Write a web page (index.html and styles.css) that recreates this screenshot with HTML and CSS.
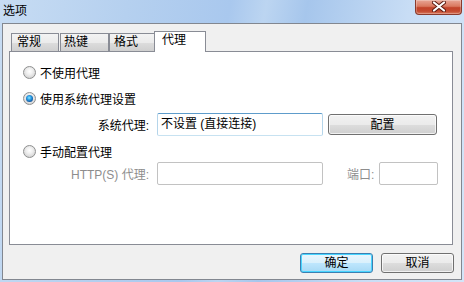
FILE: index.html
```html
<!DOCTYPE html>
<html lang="zh-CN">
<head>
<meta charset="utf-8">
<title>选项</title>
<link rel="stylesheet" href="styles.css">
</head>
<body>
<div class="window">
  <div class="titlebar">
    <span class="title">选项</span>
    <span class="close">
      <svg width="14" height="11" viewBox="0 0 14 11">
        <path d="M2 1.5 L12 9.5 M12 1.5 L2 9.5" stroke="#5a1a10" stroke-width="4" stroke-linecap="round"/>
        <path d="M2 1.5 L12 9.5 M12 1.5 L2 9.5" stroke="#ffffff" stroke-width="2.2" stroke-linecap="round"/>
      </svg>
    </span>
  </div>
  <div class="client">
    <div class="tabs">
      <div class="tab t1">常规</div>
      <div class="tab t2">热键</div>
      <div class="tab t3">格式</div>
      <div class="tab active">代理</div>
    </div>
    <div class="panel">
      <div class="radio-row r1"><span class="radio"></span><span>不使用代理</span></div>
      <div class="radio-row r2"><span class="radio checked"></span><span>使用系统代理设置</span></div>
      <div class="field-row f1">
        <span class="label">系统代理:</span>
        <span class="textbox focus">不设置 (直接连接)</span>
        <span class="button wide">配置</span>
      </div>
      <div class="radio-row r3"><span class="radio"></span><span>手动配置代理</span></div>
      <div class="field-row f2">
        <span class="label disabled">HTTP(S) 代理:</span>
        <span class="textbox dis"></span>
        <span class="port-label disabled">端口:</span>
        <span class="textbox dis port"></span>
      </div>
    </div>
    <div class="actions">
      <span class="button default">确定</span>
      <span class="button">取消</span>
    </div>
  </div>
</div>
</body>
</html>
```
FILE: styles.css
```css
html, body {
  margin: 0;
  padding: 0;
}
body {
  width: 464px;
  height: 282px;
  overflow: hidden;
  font-family: "Liberation Sans", "Noto Sans CJK SC", sans-serif;
  font-size: 12px;
  color: #000;
}
.window {
  width: 464px;
  height: 282px;
  box-sizing: border-box;
  padding: 0 2px 2px 2px;
  display: flex;
  flex-direction: column;
  background: linear-gradient(100deg, #c7dcf3 0%, #b5d0ef 25%, #a9c8ee 45%, #bcd5f1 52%, #a6c6ec 60%, #c8ddf5 80%, #d3e5f8 100%);
}
.titlebar {
  height: 23px;
  display: flex;
  align-items: flex-start;
  justify-content: space-between;
}
.title {
  margin-top: 4px;
  margin-left: 1px;
  font-size: 12px;
  line-height: 15px;
  color: #000;
}
.close {
  width: 47px;
  height: 15px;
  box-sizing: border-box;
  border: 1px solid #8a3a2c;
  border-top: none;
  border-radius: 0 0 4px 4px;
  background: linear-gradient(to bottom, #e8a696 0%, #d9785f 45%, #c2432a 55%, #c44a30 80%, #d87a5e 100%);
  display: flex;
  align-items: center;
  justify-content: center;
  box-shadow: inset 0 0 0 1px rgba(255,255,255,0.25);
}
.close svg {
  display: block;
  margin-top: -1px;
}
.client {
  flex: 1;
  border: 1px solid #828790;
  background: #f0f0f0;
  display: flex;
  flex-direction: column;
}
.tabs {
  display: flex;
  align-items: flex-end;
  height: 20px;
  margin: 7px 0 0 8px;
  position: relative;
  z-index: 1;
}
.tab {
  box-sizing: border-box;
  height: 18px;
  border: 1px solid #898c95;
  border-bottom: none;
  background: linear-gradient(to bottom, #f3f3f3 0%, #ebebeb 50%, #dddddd 51%, #cfcfcf 100%);
  line-height: 17px;
  padding-left: 5px;
  margin-right: 1px;
}
.t1 { width: 48px; padding-left: 5px; }
.t2 { width: 49px; padding-left: 3px; margin-right: 0; }
.t3 { width: 46px; padding-left: 4px; margin-right: 0; }
.active {
  width: 52px;
  height: 21px;
  margin-bottom: -1px;
  margin-left: -1px;
  background: #fff;
  padding-left: 7px;
  line-height: 17px;
}
.panel {
  margin: 0 8px 0 6px;
  height: 194px;
  box-sizing: border-box;
  border: 1px solid #898c95;
  background: #fff;
  padding: 12px 0 0 13px;
  display: flex;
  flex-direction: column;
}
.radio-row {
  display: flex;
  align-items: center;
  height: 16px;
  gap: 4px;
}
.r2 { margin-top: 10px; }
.r3 { margin-top: 7px; }
.radio {
  width: 13px;
  height: 13px;
  box-sizing: border-box;
  border-radius: 50%;
  border: 1px solid #8e8f8f;
  background: radial-gradient(circle at 50% 40%, #ffffff 0%, #f0f0f0 35%, #d6d6d6 75%, #c6c6c6 100%);
  display: flex;
  align-items: center;
  justify-content: center;
}
.radio.checked::after {
  content: "";
  width: 7px;
  height: 7px;
  border-radius: 50%;
  background: radial-gradient(circle at 45% 40%, #8ae6ff 0%, #2da0e6 35%, #0d4f9a 75%, #0a2f63 100%);
}
.field-row {
  display: flex;
  align-items: center;
  height: 23px;
  margin-left: -13px;
}
.f1 { margin-top: 7px; }
.f2 { margin-top: 3px; }
.label {
  width: 139px;
  text-align: right;
  margin-right: 8px;
  white-space: nowrap;
}
.disabled {
  color: #8d8d8d;
}
.textbox {
  width: 166px;
  height: 23px;
  box-sizing: border-box;
  border: 1px solid #abadb3;
  border-radius: 2px;
  padding-left: 3px;
  line-height: 20px;
  background: #fff;
  white-space: nowrap;
}
.textbox.focus {
  border-color: #b5cfe7 #b5d5ea #c7e2f1 #b5d5ea;
  border-top-color: #5e9ccb;
}
.textbox.dis {
  border-color: #c2c2c2;
}
.port-label {
  margin-left: 24px;
  width: 26px;
  margin-right: 6px;
  white-space: nowrap;
}
.textbox.port {
  width: 59px;
}
.button {
  box-sizing: border-box;
  height: 20px;
  width: 73px;
  border: 1px solid #707070;
  border-radius: 3px;
  background: linear-gradient(to bottom, #f2f2f2 0%, #ebebeb 50%, #dddddd 51%, #cfcfcf 100%);
  box-shadow: inset 0 0 0 1px rgba(255,255,255,0.7);
  display: flex;
  align-items: center;
  justify-content: center;
  line-height: 16px;
}
.button.wide {
  width: 109px;
  height: 21px;
  margin-left: 5px;
}
.button.default {
  border-color: #3c7fb1;
  background: linear-gradient(to bottom, #eaf6fd 0%, #d9f0fc 50%, #bee6fd 51%, #a7d9f5 100%);
  box-shadow: inset 0 0 0 1px #48d5ff;
}
.actions {
  display: flex;
  justify-content: flex-end;
  gap: 8px;
  margin-top: 8px;
  padding-right: 7px;
}
```
